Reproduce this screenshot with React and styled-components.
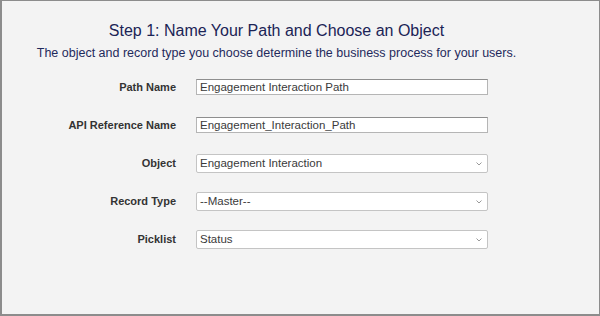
import styled, { createGlobalStyle } from "styled-components";

const GlobalStyle = createGlobalStyle`
  html, body {
    margin: 0;
    padding: 0;
    background: #f3f3f3;
  }
  * { box-sizing: border-box; }
`;

const Frame = styled.div`
  width: 600px;
  height: 316px;
  border: 1px solid #8c8c8c;
  border-left-width: 2px;
  border-bottom-width: 2px;
  background: #f3f3f3;
  font-family: "Liberation Sans", Arial, sans-serif;
  padding: 20px 48px 0 0;
`;

const Title = styled.h2`
  margin: 0;
  text-align: center;
  font-size: 16px;
  line-height: 20px;
  font-weight: 400;
  color: #1b2456;
`;

const Subtitle = styled.p`
  margin: 4px 0 0;
  text-align: center;
  font-size: 12.5px;
  line-height: 16px;
  color: #1f2a5c;
`;

const Form = styled.div`
  display: grid;
  grid-template-columns: 174px 292px;
  grid-auto-rows: 38px;
  column-gap: 20px;
  align-items: center;
  margin-top: 7px;
`;

const Label = styled.label`
  text-align: right;
  font-size: 11px;
  font-weight: 700;
  color: #333;
`;

const TextInput = styled.input`
  width: 292px;
  height: 16px;
  padding: 0 3px;
  border: 1px solid #b5b5b5;
  border-top-color: #8e8e8e;
  background: #fff;
  font-family: "Liberation Sans", Arial, sans-serif;
  font-size: 11.5px;
  color: #3a3a3a;
  outline: none;
`;

const SelectBox = styled.div`
  position: relative;
  width: 292px;
  height: 19px;
  border: 1px solid #c4c4c4;
  border-radius: 2px;
  background: #fff;
  display: flex;
  align-items: center;
  padding: 0 3px;
  font-size: 11.5px;
  color: #3a3a3a;
`;

const Chevron = styled.svg`
  position: absolute;
  right: 5px;
  top: 7px;
`;

const Select = ({ value }) => (
  <SelectBox>
    {value}
    <Chevron width="6" height="4" viewBox="0 0 6 4">
      <path d="M0.5 0.5 L3 3 L5.5 0.5" fill="none" stroke="#999" strokeWidth="1" />
    </Chevron>
  </SelectBox>
);

export default function App() {
  return (
    <Frame>
      <GlobalStyle />
      <Title>Step 1: Name Your Path and Choose an Object</Title>
      <Subtitle>
        The object and record type you choose determine the business process for your users.
      </Subtitle>
      <Form>
        <Label>Path Name</Label>
        <TextInput defaultValue="Engagement Interaction Path" />
        <Label>API Reference Name</Label>
        <TextInput defaultValue="Engagement_Interaction_Path" />
        <Label>Object</Label>
        <Select value="Engagement Interaction" />
        <Label>Record Type</Label>
        <Select value="--Master--" />
        <Label>Picklist</Label>
        <Select value="Status" />
      </Form>
    </Frame>
  );
}
